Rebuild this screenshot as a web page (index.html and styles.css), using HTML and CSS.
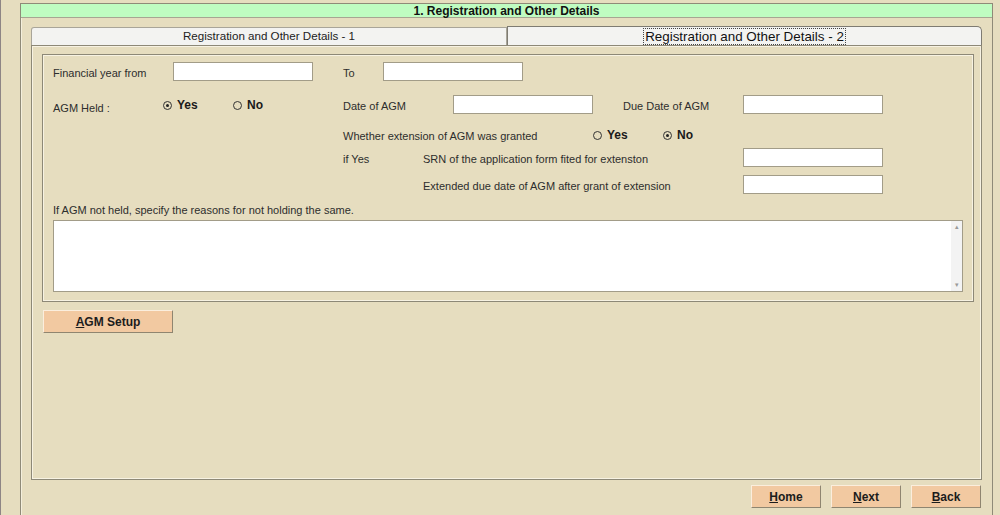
FILE: index.html
```html
<!DOCTYPE html>
<html>

<head>
    <title>Registration and Other Details</title>
    <meta charset="utf-8">
    <link rel="stylesheet" href="styles.css">
</head>

<body>

    <div class="frame">
        <div class="head">1. Registration and Other Details</div>

        <div class="content">
            <div class="tabs">
                <div class="tab">Registration and Other Details - 1</div>
                <div class="tab valgt"><span class="fokus">Registration and Other Details - 2</span></div>
            </div>

            <div class="panel">
                <div class="gruppe">

                    <div class="row">
                        <span class="lbl w120">Financial year from</span>
                        <span class="input"></span>
                        <span class="lbl w40 ml30">To</span>
                        <span class="input"></span>
                    </div>

                    <div class="row r2">
                        <span class="lbl w110 lav">AGM Held :</span>
                        <span class="radio w70"><i class="prik valgt"></i>Yes</span>
                        <span class="radio w110"><i class="prik"></i>No</span>
                        <span class="lbl w110">Date of AGM</span>
                        <span class="input"></span>
                        <span class="lbl w120 ml30">Due Date of AGM</span>
                        <span class="input"></span>
                    </div>

                    <div class="row r3">
                        <span class="lbl w250 ml290">Whether extension of AGM was granted</span>
                        <span class="radio w70"><i class="prik"></i>Yes</span>
                        <span class="radio"><i class="prik valgt"></i>No</span>
                    </div>

                    <div class="row r4">
                        <span class="lbl w80 ml290">if Yes</span>
                        <span class="lbl w320">SRN of the application form fited for extenston</span>
                        <span class="input"></span>
                    </div>

                    <div class="row r5">
                        <span class="lbl w320 ml370">Extended due date of AGM after grant of extension</span>
                        <span class="input"></span>
                    </div>

                    <div class="row r6">
                        <span class="lbl">If AGM not held, specify the reasons for not holding the same.</span>
                    </div>

                    <div class="memo">
                        <div class="tekst"></div>
                        <div class="scroll">
                            <span>&#9652;</span>
                            <span>&#9662;</span>
                        </div>
                    </div>

                </div>

                <button class="knap setup"><u>A</u>GM Setup</button>
            </div>

            <div class="knapper">
                <button class="knap"><u>H</u>ome</button>
                <button class="knap"><u>N</u>ext</button>
                <button class="knap"><u>B</u>ack</button>
            </div>
        </div>
    </div>

</body>

</html>
```

FILE: styles.css
```css
html,
body {
    margin: 0;
    height: 100%;
    overflow: hidden;
}

body {
    background: #e6ddbf;
    border-left: 1px solid #8e8585;
    font-family: "Liberation Sans", Arial, sans-serif;
    font-size: 11px;
    color: #2d2d2d;
}

.frame {
    margin: 3px 0 0 19px;
    width: 973px;
    height: 512px;
    box-sizing: border-box;
    border: 1px solid #8f8a78;
    border-bottom: 0;
    box-shadow: inset 1px 0 #f4efdc;
}

.head {
    height: 13px;
    line-height: 14px;
    background: #bffcc1;
    border-bottom: 1px solid #a7a592;
    text-align: center;
    font-weight: bold;
    font-size: 12px;
    color: #111;
}

.content {
    padding: 8px 10px 0 10px;
}

/* faner */

.tabs {
    display: flex;
    align-items: flex-end;
    height: 19px;
}

.tab {
    width: 476px;
    height: 18px;
    box-sizing: border-box;
    background: #f3f3f1;
    border: 1px solid #a9a599;
    border-bottom: 0;
    border-radius: 3px 0 0 0;
    text-align: center;
    font-size: 11.6px;
    line-height: 16px;
    color: #222;
}

.tab.valgt {
    flex: 1;
    height: 19px;
    border-color: #7e7b72;
    border-radius: 0 5px 0 0;
    font-size: 13.4px;
    line-height: 19px;
    color: #111;
}

.fokus {
    border: 1px dotted #444;
    padding: 0 1px;
}

/* panel */

.panel {
    height: 435px;
    box-sizing: border-box;
    border: 1px solid #8d8877;
    box-shadow: inset 1px 1px #f7f2e2, inset -1px -1px #f7f2e2;
    padding: 8px 7px 0 10px;
}

.gruppe {
    border: 1px solid #8d8877;
    box-shadow: inset 0 0 0 1px #f7f2e2;
    padding: 7px 10px 9px 10px;
}

.row {
    display: flex;
    align-items: center;
    height: 19px;
}

.row .lbl {
    padding-top: 2px;
}

.r2 {
    margin-top: 14px;
}

.r3 {
    margin-top: 11px;
}

.r4 {
    margin-top: 4px;
}

.r5 {
    margin-top: 8px;
}

.r6 {
    margin-top: 5px;
}

.lbl {
    white-space: nowrap;
    flex-shrink: 0;
}

.row .lav {
    padding-top: 7px;
}

.w40 { width: 40px; }
.w70 { width: 70px; }
.w80 { width: 80px; }
.w110 { width: 110px; }
.w120 { width: 120px; }
.w250 { width: 250px; }
.w320 { width: 320px; }
.ml30 { margin-left: 30px; }
.ml290 { margin-left: 290px; }
.ml370 { margin-left: 370px; }

.input {
    width: 140px;
    height: 19px;
    box-sizing: border-box;
    background: #fff;
    border: 1px solid #a29c88;
    flex-shrink: 0;
}

.radio {
    display: flex;
    align-items: center;
    font-weight: bold;
    font-size: 12px;
    color: #1a1a1a;
    flex-shrink: 0;
    padding-top: 1px;
}

.prik {
    width: 7px;
    height: 7px;
    border: 1px solid #333;
    border-radius: 50%;
    margin-right: 5px;
    position: relative;
}

.prik.valgt::after {
    content: "";
    position: absolute;
    left: 2px;
    top: 2px;
    width: 3px;
    height: 3px;
    border-radius: 50%;
    background: #222;
}

.memo {
    display: flex;
    margin-top: 2px;
    height: 72px;
    box-sizing: border-box;
    background: #fff;
    border: 1px solid #a29c88;
}

.tekst {
    flex: 1;
}

.scroll {
    width: 11px;
    background: #f3f3f3;
    display: flex;
    flex-direction: column;
    justify-content: space-between;
    align-items: center;
    font-size: 7px;
    color: #9a9a9a;
    padding: 2px 0;
}

/* knapper */

.knap {
    width: 70px;
    height: 23px;
    background: #f2c9a1;
    border: 1px solid;
    border-color: #fbeedd #8f8570 #8f8570 #fbeedd;
    font-family: "Liberation Sans", Arial, sans-serif;
    font-weight: bold;
    font-size: 12px;
    color: #1c1c1c;
    padding: 0;
    cursor: pointer;
}

.setup {
    display: block;
    width: 130px;
    margin: 8px 0 0 1px;
}

.knapper {
    display: flex;
    justify-content: flex-end;
    gap: 10px;
    margin-top: 5px;
    padding-right: 1px;
}
```
